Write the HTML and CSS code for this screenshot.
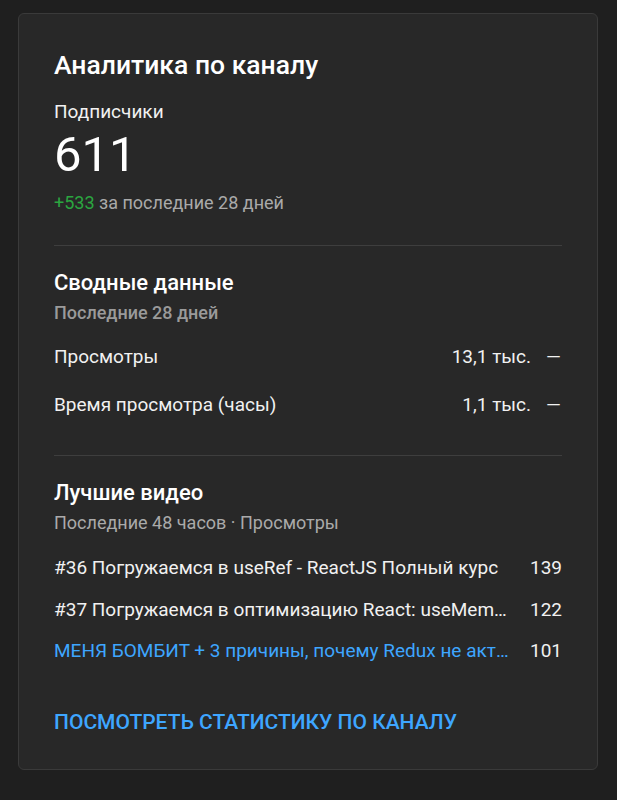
FILE: index.html
```html
<!DOCTYPE html>
<html lang="ru">
<head>
<meta charset="utf-8">
<link rel="stylesheet" href="styles.css">
</head>
<body>
<div class="card">
  <h1 class="title">Аналитика по каналу</h1>
  <div class="subs">
    <div class="subs-label">Подписчики</div>
    <div class="subs-count">611</div>
    <div class="subs-delta"><span class="green">+533</span> за последние 28 дней</div>
  </div>
  <div class="divider"></div>
  <div class="section">
    <h2 class="section-title">Сводные данные</h2>
    <div class="section-sub bold">Последние 28 дней</div>
    <div class="metrics">
      <div class="metric"><span class="m-name">Просмотры</span><span class="m-val">13,1 тыс.</span><span class="m-dash">—</span></div>
      <div class="metric"><span class="m-name">Время просмотра (часы)</span><span class="m-val">1,1 тыс.</span><span class="m-dash">—</span></div>
    </div>
  </div>
  <div class="divider"></div>
  <div class="section">
    <h2 class="section-title">Лучшие видео</h2>
    <div class="section-sub">Последние 48 часов · Просмотры</div>
    <div class="videos">
      <div class="video"><span class="v-name">#36 Погружаемся в useRef - ReactJS Полный курс</span><span class="v-num">139</span></div>
      <div class="video"><span class="v-name">#37 Погружаемся в оптимизацию React: useMemo, useCallback, React.memo</span><span class="v-num">122</span></div>
      <div class="video"><span class="v-name link">МЕНЯ БОМБИТ + 3 причины, почему Redux не актуален в 2023</span><span class="v-num">101</span></div>
    </div>
  </div>
  <a class="cta" href="#">Посмотреть статистику по каналу</a>
</div>
</body>
</html>
```
FILE: styles.css
```css
* { box-sizing: border-box; }
html, body { margin: 0; }
body {
  background: #1f1f1f;
  padding: 13px 19px 30px 18px;
  font-family: Roboto, "Noto Sans", sans-serif;
  color: #f1f1f1;
}
.card {
  width: 580px;
  height: 757px;
  background: #282828;
  border: 1px solid #3a3a3a;
  border-radius: 6px;
  padding: 35px 35px 35px 35px;
  display: flex;
  flex-direction: column;
}
.title {
  margin: 0;
  font-size: 26.5px;
  line-height: 32px;
  font-weight: 500;
  color: #fff;
}
.subs { margin-top: 19px; }
.subs-label { font-size: 19px; line-height: 24px; }
.subs-count { font-size: 49px; line-height: 56px; margin-top: 3px; color: #fff; }
.subs-delta { font-size: 18px; line-height: 20px; color: #aaa; margin-top: 10px; }
.green { color: #2ba640; }
.divider { height: 1px; background: #3e3e3e; margin: 32px 0 23px; }
.section + .divider { margin-top: 38px; }
.section-title { margin: 0; font-size: 22px; line-height: 28px; font-weight: 500; color: #fff; }
.section-sub { margin-top: 6px; font-size: 18px; line-height: 20px; color: #aaa; }
.section-sub.bold { font-weight: 500; color: #9a9a9a; }
.metrics { margin-top: 22px; display: flex; flex-direction: column; gap: 24px; }
.metric { display: flex; align-items: center; font-size: 19px; line-height: 24px; }
.m-name { flex: 1; }
.m-val { margin-right: 14px; }
.m-dash { width: 17px; text-align: center; }
.videos { margin-top: 23px; display: flex; flex-direction: column; gap: 17.5px; }
.video { display: flex; align-items: center; font-size: 19px; line-height: 24px; }
.v-name { flex: 1; min-width: 0; white-space: nowrap; overflow: hidden; text-overflow: ellipsis; }
.v-num { width: 48px; text-align: right; }
.link { color: #3ea6ff; }
.cta {
  margin-top: auto;
  font-size: 21px;
  line-height: 24px;
  font-weight: 500;
  text-transform: uppercase;
  color: #3ea6ff;
  text-decoration: none;
}
```
